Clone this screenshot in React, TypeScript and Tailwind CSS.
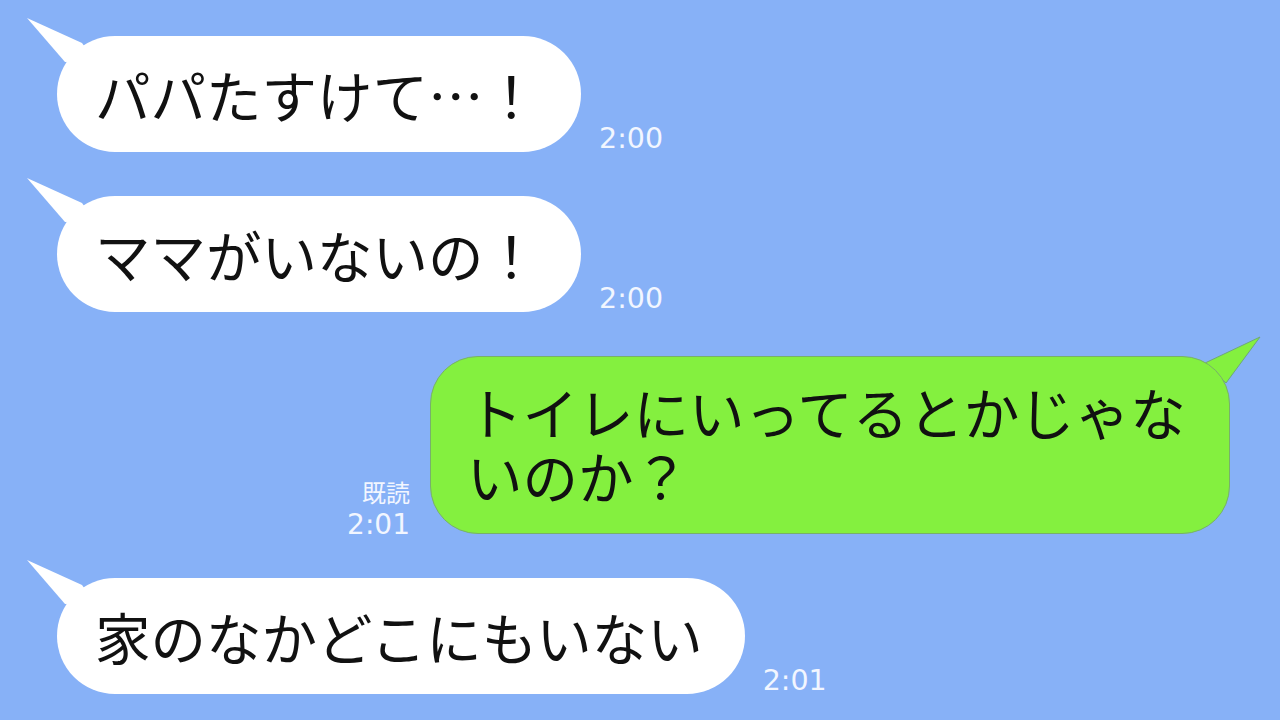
const jp = { fontFamily: '"Noto Sans CJK JP", "Noto Sans", sans-serif' };
const num = { fontFamily: '"DejaVu Sans", "Noto Sans CJK JP", sans-serif' };

function LeftBubble({ text, time }: { text: string; time: string }) {
  return (
    <div className="flex items-end gap-[18px] pl-[57px]">
      <div className="relative">
        <svg
          className="absolute left-[-32px] top-[-20px]"
          width="80"
          height="60"
          viewBox="0 0 80 60"
        >
          <polygon points="2,2 57,27 70,45 40,46" fill="#ffffff" />
        </svg>
        <div
          className="relative rounded-[58px] bg-white pl-[38px] pr-[42px] py-[26px] text-[55.5px] leading-[64px] font-normal whitespace-nowrap text-[#111]"
          style={jp}
        >
          {text}
        </div>
      </div>
      <span
        className="mb-[1px] text-[28.5px] leading-[24px] text-[#f2f6ff]"
        style={num}
      >
        {time}
      </span>
    </div>
  );
}

export default function App() {
  return (
    <div className="h-[720px] w-[1280px] overflow-hidden bg-[#87b1f7]">
      <div className="flex flex-col gap-[44px] pt-[36px]">
        <LeftBubble text="パパたすけて…！" time="2:00" />
        <LeftBubble text="ママがいないの！" time="2:00" />

        <div className="flex items-end justify-end gap-[20px] pr-[50px]">
          <div className="mb-[-6px] flex flex-col items-end text-[#f2f6ff]">
            <span className="mb-[4px] text-[24px] leading-[28px]" style={jp}>
              既読
            </span>
            <span className="text-[28px] leading-[30px]" style={num}>
              2:01
            </span>
          </div>
          <div className="relative">
            <svg
              className="absolute right-[-32px] top-[-21px]"
              width="80"
              height="60"
              viewBox="0 0 80 60"
            >
              <polygon
                points="78,2 23,28 44,48"
                fill="#84f03f"
                stroke="#6fa87a"
                strokeWidth="1"
              />
            </svg>
            <div
              className="relative w-[800px] rounded-[48px] border border-[#78b06a] bg-[#84f03f] pl-[36px] pr-[30px] pt-[22px] pb-[26px] text-[55.5px] leading-[64px] font-normal whitespace-nowrap text-[#111]"
              style={jp}
            >
              <div>トイレにいってるとかじゃな</div>
              <div>いのか？</div>
            </div>
          </div>
        </div>

        <LeftBubble text="家のなかどこにもいない" time="2:01" />
      </div>
    </div>
  );
}
